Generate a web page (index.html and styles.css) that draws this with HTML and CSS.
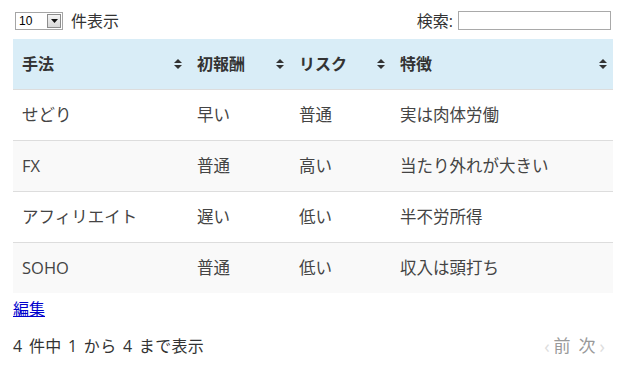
FILE: index.html
```html
<!DOCTYPE html>
<html lang="ja">
<head>
  <meta charset="UTF-8">
  <title>副業一覧</title>
  <link rel="stylesheet" href="styles.css">
</head>
<body>
  <div class="wrapper">
    <div class="toolbar">
      <label class="length">
        <span class="fake-select">
          <span class="fake-select-value">10</span>
          <span class="fake-select-btn">
            <svg width="7" height="4" viewBox="0 0 7 4"><path d="M0 0h7L3.5 4z" fill="#111"/></svg>
          </span>
        </span>
        件表示
      </label>
      <label class="filter">検索: <input type="search" class="search"></label>
    </div>

    <table class="datatable">
      <thead>
        <tr>
          <th class="col-method">手法<span class="sort"></span></th>
          <th class="col-pay">初報酬<span class="sort"></span></th>
          <th class="col-risk">リスク<span class="sort"></span></th>
          <th class="col-note">特徴<span class="sort"></span></th>
        </tr>
      </thead>
      <tbody>
        <tr><td>せどり</td><td>早い</td><td>普通</td><td>実は肉体労働</td></tr>
        <tr><td>FX</td><td>普通</td><td>高い</td><td>当たり外れが大きい</td></tr>
        <tr><td>アフィリエイト</td><td>遅い</td><td>低い</td><td>半不労所得</td></tr>
        <tr><td>SOHO</td><td>普通</td><td>低い</td><td>収入は頭打ち</td></tr>
      </tbody>
    </table>

    <a href="#" class="edit-link">編集</a>

    <div class="footer">
      <div class="info">4 件中 1 から 4 まで表示</div>
      <div class="paging">
        <span class="chev">‹</span><span class="page-btn">前</span>
        <span class="page-btn">次</span><span class="chev">›</span>
      </div>
    </div>
  </div>

  <script>
    // sort arrows for the header cells
    const arrow = '<svg width="8" height="10" viewBox="0 0 8 10"><path d="M4 0L8 4H0z M4 10L0 6h8z" fill="#333"/></svg>';
    document.querySelectorAll('.sort').forEach(function (el) {
      el.innerHTML = arrow;
    });
  </script>
</body>
</html>
```

FILE: styles.css
```css
body {
  margin: 0;
  background: #fff;
  color: #333;
  font-family: "Open Sans", "Noto Sans CJK JP", sans-serif;
  font-size: 16px;
}

.wrapper {
  width: 600px;
  padding: 0 9px 0 13px;
}

.toolbar {
  display: flex;
  justify-content: space-between;
  align-items: center;
  height: 39px;
  padding-top: 2px;
  box-sizing: border-box;
  line-height: 20px;
}

.length {
  display: flex;
  align-items: center;
  gap: 8px;
  padding-left: 2px;
}

.fake-select {
  display: flex;
  align-items: center;
  width: 45px;
  height: 16px;
  border: 1px solid #a5a5a5;
  padding: 0 1px 0 0;
  background: #fff;
}

.fake-select-value {
  flex: 1;
  padding-left: 3px;
  font-family: "Liberation Sans", Arial, sans-serif;
  font-size: 12px;
  line-height: 16px;
  color: #000;
}

.fake-select-btn {
  display: flex;
  align-items: center;
  justify-content: center;
  width: 14px;
  height: 14px;
  border: 1px solid #8c8c8c;
  box-sizing: border-box;
  background: linear-gradient(#f4f4f4, #d8d8d8);
}

.filter {
  display: flex;
  align-items: center;
  gap: 5px;
}

.search {
  width: 153px;
  height: 19px;
  box-sizing: border-box;
  margin: 0 2px 0 0;
  border: 1px solid #a9a9a9;
  padding: 0 3px;
  font-size: 13px;
}

.datatable {
  width: 600px;
  border-collapse: collapse;
  table-layout: fixed;
}

.datatable th,
.datatable td {
  box-sizing: border-box;
  padding: 13px 9px;
  line-height: 24px;
  text-align: left;
  white-space: nowrap;
  color: #444;
}

.datatable td {
  font-size: 16.5px;
  border-top: 1px solid #ddd;
}

.datatable th {
  position: relative;
  background: #d9edf7;
  font-weight: bold;
  color: #333;
  border-bottom: 1px solid #ddd;
}

.datatable tbody tr:first-child td {
  border-top: none;
}

.datatable tbody tr:nth-child(even) td {
  background: #f9f9f9;
}

.col-method { width: 175px; }
.col-pay { width: 102px; }
.col-risk { width: 101px; }
.col-note { width: 222px; }

.sort {
  position: absolute;
  right: 6px;
  top: 20px;
  line-height: 0;
}

.edit-link {
  display: inline-block;
  margin-top: 5px;
  color: #00c;
  line-height: 22px;
}

.footer {
  display: flex;
  justify-content: space-between;
  align-items: center;
  margin-top: 15px;
  line-height: 22px;
}

.info {
  word-spacing: 2px;
  letter-spacing: 0.3px;
}

.paging {
  display: flex;
  align-items: center;
  color: #999;
  font-size: 17px;
  padding-right: 8px;
}

.page-btn {
  margin: 0 4px;
}

.chev {
  color: #ddd;
  font-size: 18px;
}
```
